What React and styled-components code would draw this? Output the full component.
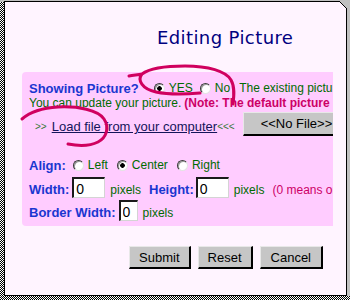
import React from "react";
import styled, { createGlobalStyle } from "styled-components";

const GlobalStyle = createGlobalStyle`
  html, body {
    margin: 0;
    padding: 0;
  }
  body {
    width: 350px;
    height: 300px;
    overflow: hidden;
    font-family: "Liberation Sans", Arial, sans-serif;
  }
`;

const Desk = styled.div`
  width: 350px;
  height: 300px;
  box-sizing: border-box;
  padding: 1px 0 0 4px;
  background:
    linear-gradient(#c0c0c0, #c0c0c0) left top / 4px 2px no-repeat,
    linear-gradient(#c0c0c0, #c0c0c0) right top / calc(100% - 4px) calc(100% - 4px) no-repeat,
    repeating-conic-gradient(#000 0 25%, #fff 0 50%) 0 0 / 2px 2px;
`;

const Window = styled.div`
  position: relative;
  box-sizing: border-box;
  width: 343px;
  height: 295px;
  border: 1px solid #000;
  background: #fff4ff;
  display: flex;
  flex-direction: column;
`;

const Fold = styled.svg`
  position: absolute;
  top: -1px;
  right: -1px;
  width: 8px;
  height: 8px;
`;

const Marks = styled.svg`
  position: absolute;
  left: -5px;
  top: -2px;
  width: 350px;
  height: 300px;
  pointer-events: none;
  z-index: 2;
`;

const Title = styled.h1`
  margin: 25px 0 0 152px;
  font: 18px/22px "DejaVu Sans", Verdana, sans-serif;
  letter-spacing: 0.4px;
  color: #000080;
`;

const Panel = styled.div`
  margin: 23px 0 0 17px;
  width: 311px;
  box-sizing: border-box;
  padding: 9px 0 5px 7px;
  background: #ffccff;
  border-radius: 4px 0 0 4px;
  overflow: hidden;
  white-space: nowrap;
`;

const Row = styled.div`
  display: flex;
  align-items: ${(p) => p.$align || "center"};
  height: ${(p) => p.$h || 15}px;
  margin-top: ${(p) => p.$mt || 0}px;
  & > * {
    flex-shrink: 0;
  }
`;

const Label = styled.span`
  margin-left: ${(p) => p.$ml || 0}px;
  font-size: 13px;
  line-height: 15px;
  font-weight: bold;
  color: #1a36d0;
`;

const Text = styled.span`
  margin-left: ${(p) => p.$ml || 0}px;
  font-size: 12px;
  line-height: 15px;
  font-weight: ${(p) => (p.$bold ? "bold" : "normal")};
  color: ${(p) => (p.$warn ? "#cc0066" : "#006b00")};
`;

const Arrows = styled.span`
  margin: 0 0 2px ${(p) => p.$ml || 0}px;
  font-size: 10px;
  line-height: 15px;
  color: #3a7a3a;
`;

const Link = styled.span`
  margin: 0 0 2px ${(p) => p.$ml || 0}px;
  font-size: 13px;
  line-height: 15px;
  color: #14145a;
  text-decoration: underline;
`;

const Choice = styled.span`
  display: inline-flex;
  align-items: center;
  gap: 4px;
  margin-left: ${(p) => p.$ml || 0}px;
  font-size: 12px;
  line-height: 15px;
  color: #006b00;
`;

const Radio = styled.span`
  display: inline-block;
  box-sizing: border-box;
  width: 11px;
  height: 11px;
  border-radius: 50%;
  border: 1px solid;
  border-color: #3a3a3a #e4e4e4 #e4e4e4 #3a3a3a;
  box-shadow: inset 1px 1px #9a9a9a;
  background: ${(p) =>
    p.$checked ? "radial-gradient(circle, #000 0 2px, #fff 2.6px)" : "#fff"};
`;

const Field = styled.input`
  box-sizing: border-box;
  width: ${(p) => p.$w}px;
  height: 21px;
  margin-left: ${(p) => p.$ml || 0}px;
  padding: 1px 2px 0;
  border-style: solid;
  border-width: 2px 1px 1px 2px;
  border-color: #1a1a1a #d4d4d4 #d4d4d4 #1a1a1a;
  background: #fff;
  font: 14px "Liberation Sans", Arial, sans-serif;
  color: #000;
  outline: none;
`;

const Button = styled.button`
  box-sizing: border-box;
  height: ${(p) => p.$h || 23}px;
  margin-left: ${(p) => p.$ml || 0}px;
  padding: 0 ${(p) => p.$px || 9}px;
  background: #c6c6c6;
  border-style: solid;
  border-width: 1px 2px 2px 1px;
  border-color: #e8e8e8 #000 #000 #e8e8e8;
  border-radius: 0;
  font: 13px "Liberation Sans", Arial, sans-serif;
  color: #000;
  text-align: left;
`;

const Actions = styled.div`
  display: flex;
  justify-content: flex-end;
  gap: 7px;
  margin-top: 20px;
  padding-right: 23px;
`;

export default function App() {
  return (
    <Desk>
      <GlobalStyle />
      <Window>
        <Fold viewBox="0 0 8 8">
          <polygon points="0,0 8,0 8,8" fill="#c0c0c0" />
          <line x1="0" y1="0" x2="8" y2="8" stroke="#000" strokeWidth="1" />
        </Fold>

        <Title>Editing Picture</Title>

        <Panel>
          <Row>
            <Label>Showing Picture?</Label>
            <Choice $ml={15}>
              <Radio $checked />
              YES
            </Choice>
            <Choice $ml={7}>
              <Radio />
              No
            </Choice>
            <Text $ml={9}>The existing picture will be shown.</Text>
          </Row>
          <Row>
            <Text>You can update your picture.</Text>
            <Text $ml={3} $bold $warn>
              (Note: The default picture is used if none is loaded.)
            </Text>
          </Row>
          <Row $h={24} $mt={1} $align="flex-end">
            <Arrows $ml={6}>&gt;&gt;</Arrows>
            <Link $ml={5}>Load file from your computer</Link>
            <Arrows>&lt;&lt;&lt;</Arrows>
            <Button $ml={8} $h={24} $px={17} style={{ alignSelf: "stretch" }}>
              &lt;&lt;No File&gt;&gt;
            </Button>
          </Row>

          <Row $mt={22}>
            <Label>Align:</Label>
            <Choice $ml={7}>
              <Radio />
              Left
            </Choice>
            <Choice $ml={9}>
              <Radio $checked />
              Center
            </Choice>
            <Choice $ml={9}>
              <Radio />
              Right
            </Choice>
          </Row>
          <Row $h={21} $mt={4} $align="baseline">
            <Label>Width:</Label>
            <Field $ml={3} $w={33} defaultValue="0" />
            <Text $ml={5}>pixels</Text>
            <Label $ml={8}>Height:</Label>
            <Field $ml={2} $w={33} defaultValue="0" />
            <Text $ml={5}>pixels</Text>
            <Text $ml={8} $warn>
              (0 means original size)
            </Text>
          </Row>
          <Row $h={21} $mt={2} $align="baseline">
            <Label>Border Width:</Label>
            <Field $ml={3} $w={19} defaultValue="0" />
            <Text $ml={5}>pixels</Text>
          </Row>
        </Panel>

        <Actions>
          <Button>Submit</Button>
          <Button>Reset</Button>
          <Button $px={10}>Cancel</Button>
        </Actions>

        <Marks viewBox="0 0 350 300">
          <g fill="none" stroke="#d0005f" strokeWidth="3" strokeLinecap="round">
            <path d="M129,76 C134,75 138,75 142,74 C150,68 165,66 185,66 C208,66 226,71 231,80 C235,87 234,96 233,104 M142,74 C137,80 142,89 156,92 C170,95 188,94 200,93" />
            <path d="M22,119 C30,112 42,108 58,107 C78,106 98,110 104,119 C110,128 106,138 98,142 C90,146 78,146 68,144" />
          </g>
        </Marks>
      </Window>
    </Desk>
  );
}
